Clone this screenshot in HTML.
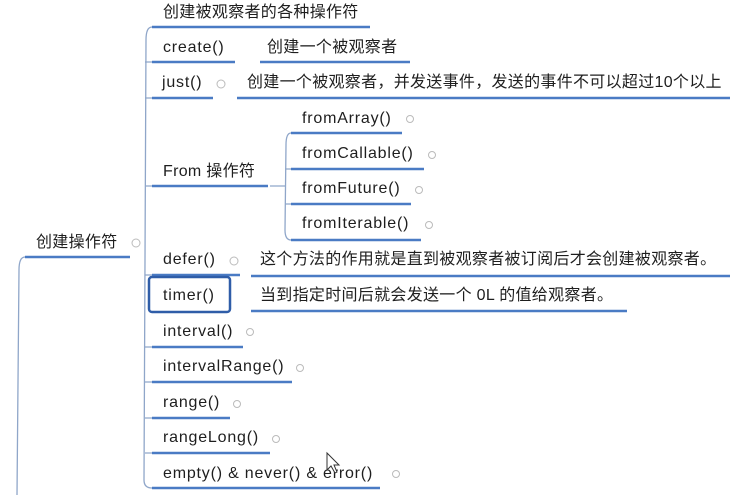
<!DOCTYPE html>
<html><head><meta charset="utf-8"><style>
html,body{margin:0;padding:0;background:#fff;}
body{width:753px;height:495px;position:relative;overflow:hidden;font-family:"Liberation Sans","Noto Sans CJK SC",sans-serif;font-size:16px;color:#1e1e1e;}
.t{position:absolute;white-space:nowrap;line-height:18px;letter-spacing:0.8px;}
.c{letter-spacing:0.3px;}
svg{position:absolute;left:0;top:0;}
</style></head><body>
<svg width="753" height="495">
<g stroke="#4a7bc4" stroke-width="2.5" fill="none">
<line x1="152" y1="27" x2="370" y2="27"/>
<line x1="152" y1="62" x2="235" y2="62"/>
<line x1="260" y1="62" x2="410" y2="62"/>
<line x1="152" y1="98" x2="213" y2="98"/>
<line x1="237" y1="98" x2="730" y2="98"/>
<line x1="152" y1="186" x2="268" y2="186"/>
<line x1="291" y1="133" x2="402" y2="133"/>
<line x1="291" y1="169" x2="424" y2="169"/>
<line x1="291" y1="204" x2="411" y2="204"/>
<line x1="291" y1="240" x2="421" y2="240"/>
<line x1="25" y1="257" x2="130" y2="257"/>
<line x1="152" y1="275" x2="240" y2="275"/>
<line x1="251" y1="276" x2="730" y2="276"/>
<line x1="251" y1="311" x2="627" y2="311"/>
<line x1="152" y1="347" x2="243" y2="347"/>
<line x1="152" y1="382" x2="292" y2="382"/>
<line x1="152" y1="418" x2="230" y2="418"/>
<line x1="152" y1="453" x2="270" y2="453"/>
<line x1="152" y1="488" x2="380" y2="488"/>
</g>
<rect x="149" y="277" width="81" height="35" rx="3" fill="none" stroke="#2f5da8" stroke-width="2.5"/>
<g stroke="#8fa6c9" stroke-width="1.3" fill="none">
<path d="M152 27 Q146 27 146 40 L144 480 Q144 488 152 488"/>
<path d="M145 62 Q146 62 152 62 M145 98 L152 98 M145 186 L152 186 M145 275 L152 275 M145 347 L152 347 M145 382 Q146 382 152 382 M145 418 L152 418 M145 453 L152 453"/>
<path d="M25 257 Q19 257 19 270 L17 495"/>
<path d="M291 133 Q286 133 286 145 L285 230 Q285 240 291 240 M270 186 L285 186 M285 169 L291 169 M285 204 L291 204"/>
</g>
<g fill="none" stroke="#bbb" stroke-width="1">
<circle cx="136" cy="243" r="4"/><circle cx="221" cy="84" r="4"/><circle cx="234" cy="261" r="4"/>
<circle cx="250" cy="332" r="3.5"/><circle cx="300" cy="368" r="3.5"/><circle cx="237" cy="404" r="3.5"/>
<circle cx="276" cy="439" r="3.5"/><circle cx="396" cy="474" r="3.5"/><circle cx="410" cy="119" r="3.5"/>
<circle cx="432" cy="155" r="3.5"/><circle cx="419" cy="190" r="3.5"/><circle cx="429" cy="225" r="3.5"/>
</g>
</svg>
<div class="t c" style="left:163px;top:4px">创建被观察者的各种操作符</div>
<div class="t" style="left:163px;top:39px">create()</div>
<div class="t c" style="left:267px;top:39px">创建一个被观察者</div>
<div class="t" style="left:162px;top:74px">just()</div>
<div class="t c" style="left:247px;top:74px">创建一个被观察者，并发送事件，发送的事件不可以超过10个以上</div>
<div class="t c" style="left:163px;top:163px">From 操作符</div>
<div class="t" style="left:302px;top:110px">fromArray()</div>
<div class="t" style="left:302px;top:145px">fromCallable()</div>
<div class="t" style="left:302px;top:180px">fromFuture()</div>
<div class="t" style="left:302px;top:215px">fromIterable()</div>
<div class="t c" style="left:36px;top:234px">创建操作符</div>
<div class="t" style="left:163px;top:251px">defer()</div>
<div class="t c" style="left:260px;top:251px">这个方法的作用就是直到被观察者被订阅后才会创建被观察者。</div>
<div class="t" style="left:163px;top:287px">timer()</div>
<div class="t c" style="left:260px;top:287px">当到指定时间后就会发送一个 0L 的值给观察者。</div>
<div class="t" style="left:163px;top:323px">interval()</div>
<div class="t" style="left:163px;top:358px">intervalRange()</div>
<div class="t" style="left:163px;top:394px">range()</div>
<div class="t" style="left:163px;top:429px">rangeLong()</div>
<div class="t" style="left:163px;top:465px">empty() &amp; never() &amp; error()</div>
<svg width="753" height="495" style="pointer-events:none"><path d="M327 453 L327 470 L331 466 L335 473 L337 472 L334 465 L339 465 Z" fill="#fff" stroke="#333" stroke-width="1"/></svg>
</body></html>
